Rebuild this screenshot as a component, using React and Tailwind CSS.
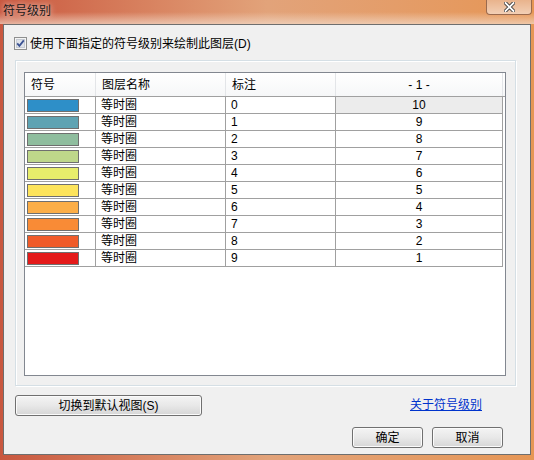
import React from "react";

const ROWS = [
  { c: "#2e8fc8", n: 10 },
  { c: "#5ea3b3", n: 9 },
  { c: "#8fbd9e", n: 8 },
  { c: "#bed78a", n: 7 },
  { c: "#e7ed6b", n: 6 },
  { c: "#fde45b", n: 5 },
  { c: "#fcae47", n: 4 },
  { c: "#f98b36", n: 3 },
  { c: "#f05b29", n: 2 },
  { c: "#e41a1a", n: 1 },
];

const font = { fontFamily: '"Liberation Sans", "Noto Sans CJK SC", sans-serif' };

const WinButton = ({ className, children }) => (
  <button
    className={`h-[21px] rounded-[3px] border border-[#707070] bg-gradient-to-b from-[#f4f4f4] via-[#e8e8e8] to-[#d6d6d6] text-[12px] text-black shadow-[inset_0_0_0_1px_#fbfbfb] ${className}`}
  >
    {children}
  </button>
);

export default function App() {
  return (
    <div
      style={font}
      className="w-[534px] h-[460px] flex flex-col bg-gradient-to-r from-[#c9573f] via-[#e2a37a] to-[#e69655] overflow-hidden"
    >
      {/* title bar */}
      <div className="relative h-[24px] flex items-start shrink-0 bg-gradient-to-b from-transparent via-transparent to-[#f3dccb]/70">
        <span className="pl-[3px] pt-[2px] text-[12px] text-[#1a1a1a] [text-shadow:0_0_6px_#fff]">符号级别</span>
        <div className="absolute right-[2px] top-0 w-[46px] h-[15px] rounded-b-[4px] border border-t-0 border-[#9a6a4e] bg-gradient-to-b from-[#e9b38c] to-[#f2cfb5] flex items-center justify-center">
          <svg width="11" height="10" viewBox="0 0 11 10">
            <path d="M1.5 1 L9.5 9 M9.5 1 L1.5 9" stroke="#3a3a3a" strokeWidth="3.6" strokeLinecap="square" />
            <path d="M1.5 1 L9.5 9 M9.5 1 L1.5 9" stroke="#ffffff" strokeWidth="1.8" strokeLinecap="square" />
          </svg>
        </div>
      </div>

      {/* client area */}
      <div className="mx-[3px] h-[431px] border border-[#6e6e6e] bg-[#f0f0f0] flex flex-col">
        {/* checkbox row */}
        <div className="flex items-center pl-[10px] mt-[12px] h-[13px]">
          <svg width="13" height="13" viewBox="0 0 13 13">
            <rect x="0.5" y="0.5" width="12" height="12" fill="#f4f4f4" stroke="#8e8f8f" />
            <rect x="2.5" y="2.5" width="8" height="8" fill="#dfe3ea" stroke="#c6cbd3" />
            <path d="M3.2 6.4 L5.4 8.8 L9.8 3.4" fill="none" stroke="#3b5293" strokeWidth="1.8" />
          </svg>
          <span className="ml-[3px] text-[12px] text-black">使用下面指定的符号级别来绘制此图层(D)</span>
        </div>

        {/* group panel */}
        <div className="ml-[11px] mt-[10px] w-[501px] h-[326px] border border-[#d5dfe5] shadow-[inset_1px_1px_0_#fff,1px_1px_0_#fff] pt-[11px] pl-[8px]">
          {/* list view */}
          <div className="w-[482px] h-[304px] border border-[#828790] bg-white text-[12px] text-black">
            {/* header */}
            <div className="flex h-[24px] border-b border-[#a0a0a0] bg-gradient-to-b from-white to-[#f6f7f8]">
              <div className="w-[71px] pl-[6px] flex items-center border-r border-[#e3e5e8]">符号</div>
              <div className="w-[130px] pl-[6px] flex items-center border-r border-[#e3e5e8]">图层名称</div>
              <div className="w-[110px] pl-[6px] flex items-center border-r border-[#e3e5e8]">标注</div>
              <div className="w-[167px] flex items-center justify-center border-r border-[#e3e5e8]">- 1 -</div>
            </div>
            {ROWS.map((r, i) => (
              <div key={i} className="flex h-[17px]">
                <div className="w-[71px] h-[17px] border-b border-r border-[#a0a0a0] pl-[2px] pt-[2px]">
                  <div className="w-[52px] h-[13px] border border-[#6f6f6f]" style={{ backgroundColor: r.c }} />
                </div>
                <div className="w-[130px] h-[17px] border-b border-r border-[#a0a0a0] pl-[5px] flex items-center">等时圈</div>
                <div className="w-[110px] h-[17px] border-b border-r border-[#a0a0a0] pl-[5px] flex items-center">{i}</div>
                <div
                  className={`w-[167px] h-[17px] border-b border-r border-[#a0a0a0] flex items-center justify-center ${
                    i === 0 ? "bg-[#ececec]" : ""
                  }`}
                >
                  {r.n}
                </div>
              </div>
            ))}
          </div>
        </div>

        {/* bottom controls */}
        <div className="mt-[9px] flex items-start pl-[11px] pr-[48px]">
          <WinButton className="w-[187px]">切换到默认视图(S)</WinButton>
          <a className="ml-auto mt-[1px] text-[12px] text-[#0033cc] underline">关于符号级别</a>
        </div>
        <div className="mt-[11px] flex justify-end gap-[9px] pr-[27px]">
          <WinButton className="w-[71px]">确定</WinButton>
          <WinButton className="w-[71px]">取消</WinButton>
        </div>
      </div>
    </div>
  );
}
